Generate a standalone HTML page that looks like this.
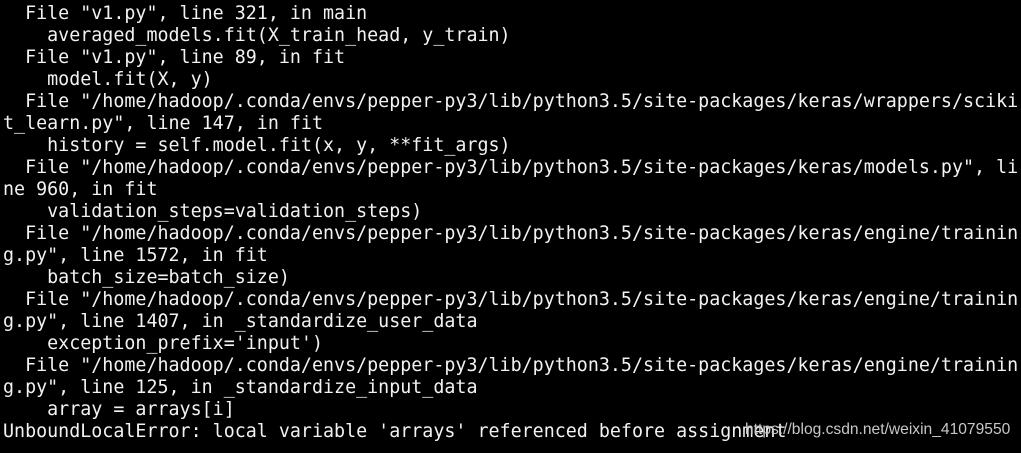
<!DOCTYPE html>
<html><head><meta charset="utf-8"><style>
html,body{margin:0;padding:0;background:#000;width:1021px;height:453px;overflow:hidden}
pre{margin:0;position:absolute;left:3px;top:3px;font-family:"DejaVu Sans Mono","Liberation Mono",monospace;font-size:18.33px;line-height:22px;color:#f2f2f2;white-space:pre}
.wm{position:absolute;left:745px;top:421px;font-family:"Liberation Sans",sans-serif;font-size:15.6px;color:#c8c8c8}
</style></head><body>
<pre>  File "v1.py", line 321, in main
    averaged_models.fit(X_train_head, y_train)
  File "v1.py", line 89, in fit
    model.fit(X, y)
  File "/home/hadoop/.conda/envs/pepper-py3/lib/python3.5/site-packages/keras/wrappers/sciki
t_learn.py", line 147, in fit
    history = self.model.fit(x, y, **fit_args)
  File "/home/hadoop/.conda/envs/pepper-py3/lib/python3.5/site-packages/keras/models.py", li
ne 960, in fit
    validation_steps=validation_steps)
  File "/home/hadoop/.conda/envs/pepper-py3/lib/python3.5/site-packages/keras/engine/trainin
g.py", line 1572, in fit
    batch_size=batch_size)
  File "/home/hadoop/.conda/envs/pepper-py3/lib/python3.5/site-packages/keras/engine/trainin
g.py", line 1407, in _standardize_user_data
    exception_prefix='input')
  File "/home/hadoop/.conda/envs/pepper-py3/lib/python3.5/site-packages/keras/engine/trainin
g.py", line 125, in _standardize_input_data
    array = arrays[i]
UnboundLocalError: local variable 'arrays' referenced before assignment</pre>
<div class="wm">https://blog.csdn.net/weixin_41079550</div>
</body></html>
